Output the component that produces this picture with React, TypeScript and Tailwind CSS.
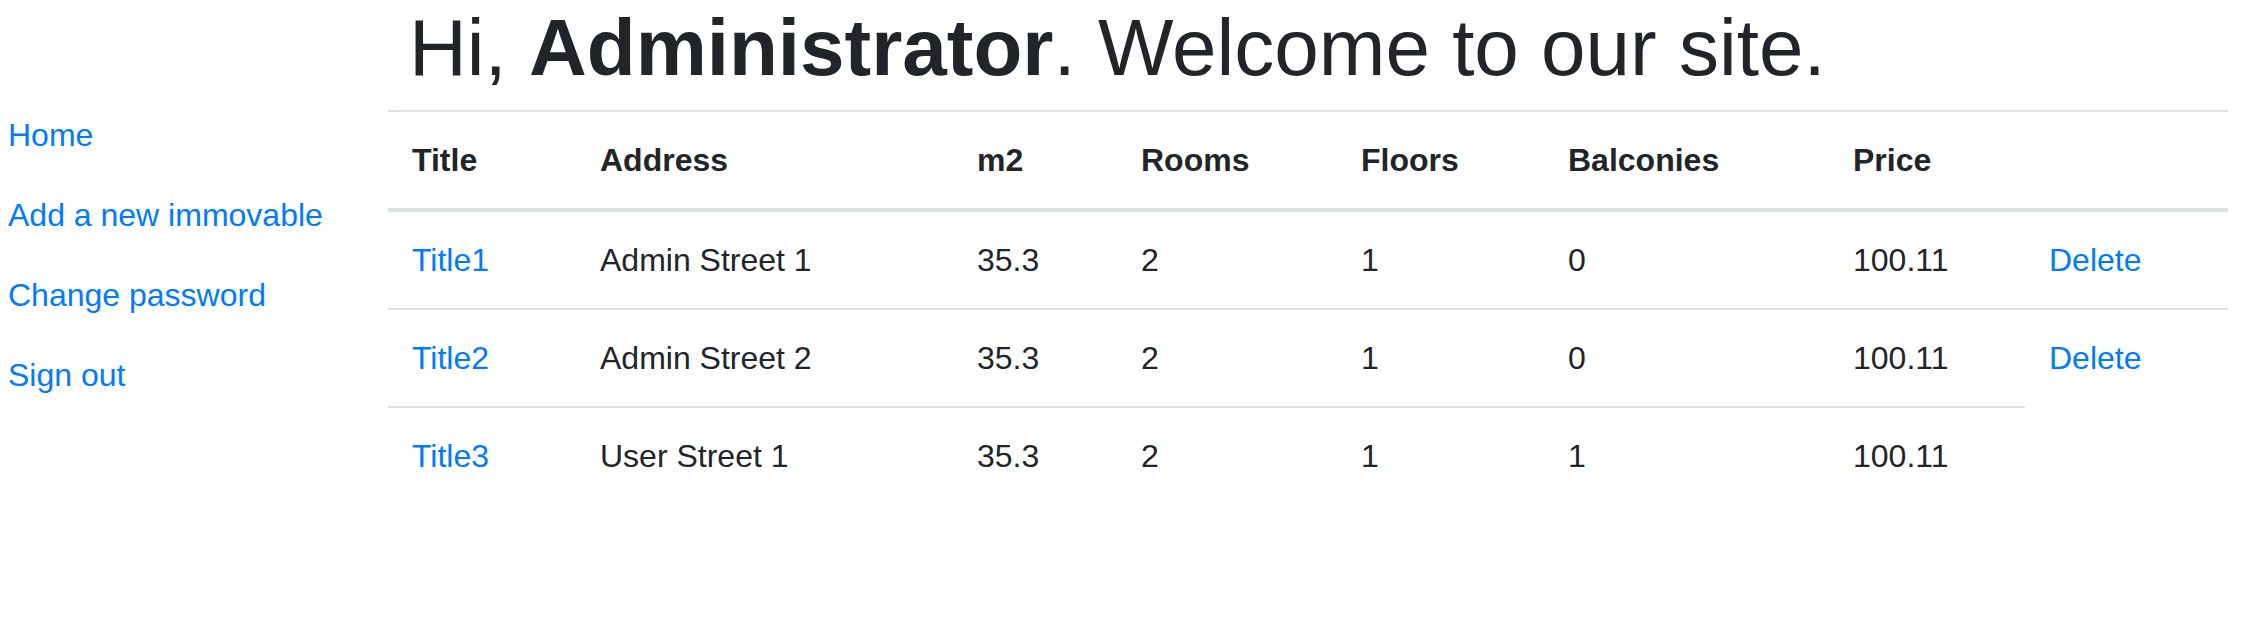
import React from 'react';

/* ─── Data ─── */
const links = ['Home', 'Add a new immovable', 'Change password', 'Sign out'];

const columns = [
  { label: 'Title', width: 'w-[188px]' },
  { label: 'Address', width: 'w-[377px]' },
  { label: 'm2', width: 'w-[164px]' },
  { label: 'Rooms', width: 'w-[220px]' },
  { label: 'Floors', width: 'w-[207px]' },
  { label: 'Balconies', width: 'w-[285px]' },
  { label: 'Price', width: 'w-[196px]' },
  { label: '', width: 'w-[203px]' },
];

const rows = [
  { title: 'Title1', address: 'Admin Street 1', m2: '35.3', rooms: 2, floors: 1, balconies: 0, price: '100.11', canDelete: true },
  { title: 'Title2', address: 'Admin Street 2', m2: '35.3', rooms: 2, floors: 1, balconies: 0, price: '100.11', canDelete: true },
  { title: 'Title3', address: 'User Street 1', m2: '35.3', rooms: 2, floors: 1, balconies: 1, price: '100.11', canDelete: false },
];

const cell = 'px-6 py-6 text-left align-top leading-[48px]';

/* ─── Sidebar ─── */
function Sidebar() {
  return (
    <nav className="w-[388px] shrink-0 pt-[95px] pl-[8px]">
      {links.map((label) => (
        <a key={label} href="#" className="block py-4 leading-[48px] text-[#007bff]">
          {label}
        </a>
      ))}
    </nav>
  );
}

/* ─── Table ─── */
function ImmovableTable() {
  return (
    <table className="w-[1840px] table-fixed border-separate border-spacing-0">
      <colgroup>
        {columns.map((c, i) => (
          <col key={i} className={c.width} />
        ))}
      </colgroup>
      <thead>
        <tr>
          {columns.map((c, i) => (
            <th key={i} className={`${cell} font-bold border-t-2 border-b-4 border-[#dee2e6]`}>
              {c.label}
            </th>
          ))}
        </tr>
      </thead>
      <tbody>
        {rows.map((r, i) => {
          const b = i === 0 ? '' : 'border-t-2 border-[#dee2e6]';
          return (
            <tr key={r.title}>
              <td className={`${cell} ${b}`}>
                <a href="#" className="text-[#007bff]">{r.title}</a>
              </td>
              <td className={`${cell} ${b}`}>{r.address}</td>
              <td className={`${cell} ${b}`}>{r.m2}</td>
              <td className={`${cell} ${b}`}>{r.rooms}</td>
              <td className={`${cell} ${b}`}>{r.floors}</td>
              <td className={`${cell} ${b}`}>{r.balconies}</td>
              <td className={`${cell} ${b}`}>{r.price}</td>
              {r.canDelete && (
                <td className={`${cell} ${b}`}>
                  <a href="#" className="text-[#007bff]">Delete</a>
                </td>
              )}
            </tr>
          );
        })}
      </tbody>
    </table>
  );
}

/* ─── Page ─── */
export default function App() {
  return (
    <div
      className="flex min-h-[628px] w-full bg-white text-[32px] text-[#212529]"
      style={{ fontFamily: '"Liberation Sans", Arial, sans-serif' }}
    >
      <Sidebar />
      <main className="flex-1 pr-4">
        <h1 className="ml-[21px] mb-[14px] text-[80px] font-medium leading-[96px]">
          Hi, <b className="font-bold">Administrator</b>. Welcome to our site.
        </h1>
        <ImmovableTable />
      </main>
    </div>
  );
}
